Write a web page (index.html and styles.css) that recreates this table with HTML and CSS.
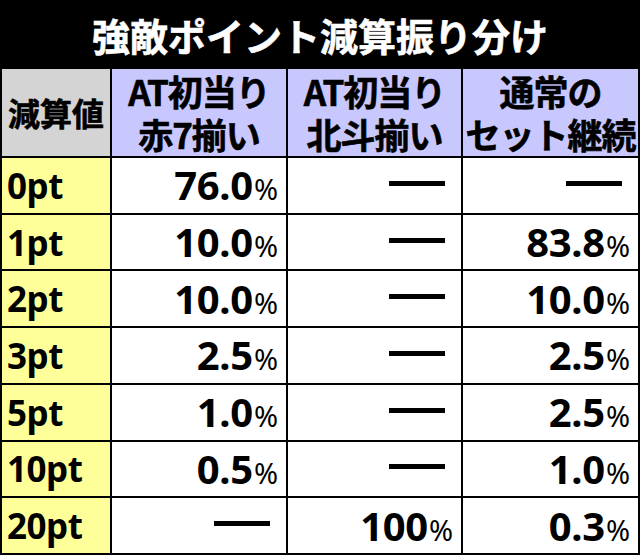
FILE: index.html
```html
<!DOCTYPE html>
<html lang="ja">
<head>
<meta charset="utf-8">
<title>強敵ポイント減算振り分け</title>
<link rel="stylesheet" href="styles.css">
</head>
<body>
<div class="sheet">
  <div class="title">強敵ポイント減算振り分け</div>
  <div class="grid">
    <div class="cell head gray">減算値</div>
    <div class="cell head lav"><div class="ln">AT初当り</div><div class="ln">赤7揃い</div></div>
    <div class="cell head lav"><div class="ln">AT初当り</div><div class="ln">北斗揃い</div></div>
    <div class="cell head lav"><div class="ln">通常の</div><div class="ln">セット継続</div></div>

    <div class="cell label">0pt</div>
    <div class="cell val"><span class="v">76.0<span class="pc">%</span></span></div>
    <div class="cell val"><span class="dash"></span></div>
    <div class="cell val"><span class="dash"></span></div>

    <div class="cell label">1pt</div>
    <div class="cell val"><span class="v">10.0<span class="pc">%</span></span></div>
    <div class="cell val"><span class="dash"></span></div>
    <div class="cell val"><span class="v">83.8<span class="pc">%</span></span></div>

    <div class="cell label">2pt</div>
    <div class="cell val"><span class="v">10.0<span class="pc">%</span></span></div>
    <div class="cell val"><span class="dash"></span></div>
    <div class="cell val"><span class="v">10.0<span class="pc">%</span></span></div>

    <div class="cell label">3pt</div>
    <div class="cell val"><span class="v">2.5<span class="pc">%</span></span></div>
    <div class="cell val"><span class="dash"></span></div>
    <div class="cell val"><span class="v">2.5<span class="pc">%</span></span></div>

    <div class="cell label">5pt</div>
    <div class="cell val"><span class="v">1.0<span class="pc">%</span></span></div>
    <div class="cell val"><span class="dash"></span></div>
    <div class="cell val"><span class="v">2.5<span class="pc">%</span></span></div>

    <div class="cell label">10pt</div>
    <div class="cell val"><span class="v">0.5<span class="pc">%</span></span></div>
    <div class="cell val"><span class="dash"></span></div>
    <div class="cell val"><span class="v">1.0<span class="pc">%</span></span></div>

    <div class="cell label">20pt</div>
    <div class="cell val"><span class="dash"></span></div>
    <div class="cell val"><span class="v">100<span class="pc">%</span></span></div>
    <div class="cell val"><span class="v">0.3<span class="pc">%</span></span></div>
  </div>
</div>
</body>
</html>
```

FILE: styles.css
```css
html, body {
  margin: 0;
  padding: 0;
  background: #fff;
}

.sheet {
  width: 640px;
  height: 555px;
  background: #000;
  display: flex;
  flex-direction: column;
}

.title {
  height: 68px;
  flex: none;
  display: flex;
  align-items: center;
  justify-content: center;
  color: #fff;
  font-family: "Noto Sans CJK JP", sans-serif;
  font-weight: 700;
  font-size: 38px;
  line-height: 1;
  -webkit-text-stroke: 0.6px #fff;
  padding-top: 1px;
  box-sizing: border-box;
}

.grid {
  flex: 1;
  display: grid;
  grid-template-columns: 108px 174px 173px 175px;
  grid-template-rows: 87px repeat(7, 1fr);
  gap: 2px;
  padding: 1px 2px 2px 2px;
  box-sizing: border-box;
}

.cell {
  display: flex;
  align-items: center;
  color: #000;
}

.head {
  flex-direction: column;
  justify-content: center;
  text-align: center;
  font-family: "Noto Sans CJK JP", sans-serif;
  font-weight: 700;
  font-size: 35px;
  letter-spacing: -1px;
  -webkit-text-stroke: 0.6px #000;
  padding-bottom: 2px;
  box-sizing: border-box;
}

.ln {
  height: 43px;
  line-height: 43px;
  white-space: nowrap;
}

.gray {
  background: #d4d4d4;
  font-size: 32px;
  line-height: 1;
  letter-spacing: 0;
}

.lav {
  background: #c8c8ff;
}

.label {
  background: #ffff99;
  font-family: "Noto Sans", sans-serif;
  font-weight: 700;
  font-size: 35px;
  line-height: 1;
  padding-left: 5px;
  letter-spacing: -0.5px;
}

.val {
  background: #fff;
  justify-content: flex-end;
  padding-right: 8px;
  font-family: "Noto Sans", sans-serif;
  font-weight: 700;
  font-size: 40px;
  line-height: 1;
}

.v {
  white-space: nowrap;
  letter-spacing: -0.3px;
}

.pc {
  font-size: 29px;
  font-weight: 400;
  letter-spacing: 0;
  margin-left: 1px;
}

.dash {
  display: block;
  width: 56px;
  height: 5px;
  background: #000;
  margin-right: 8px;
  margin-bottom: 4px;
}
```
